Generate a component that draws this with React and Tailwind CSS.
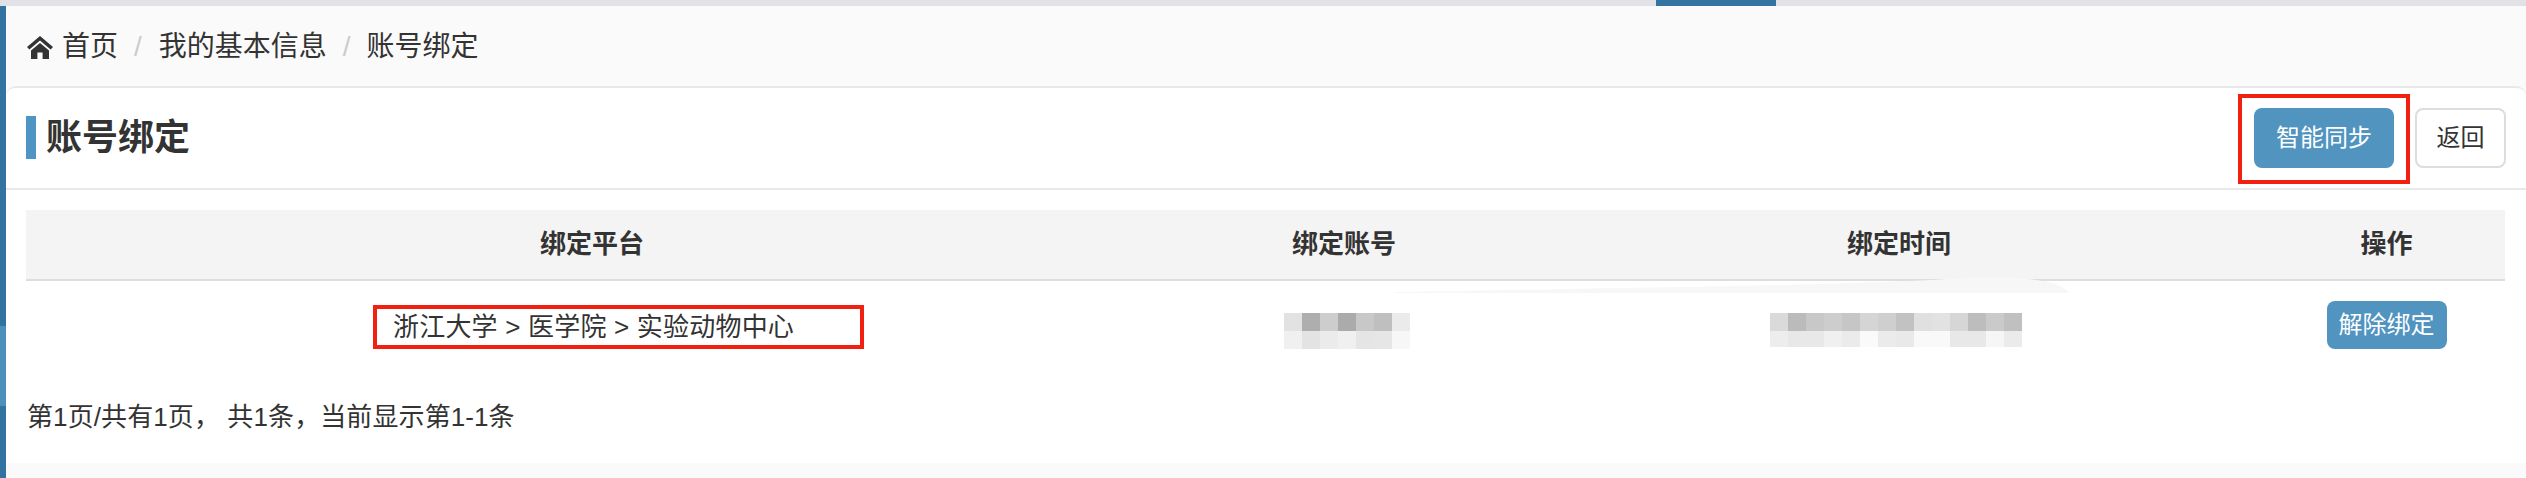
import React from 'react';

const font = { cjk: 'font-["Liberation_Sans","Noto_Sans_CJK_SC",sans-serif]' };

const accountCells = [
    ['#e2e2e2', '#aeaeae', '#cdcdcd', '#ababab', '#c8c8c8', '#bfbfbf', '#ebebeb'],
    ['#f0f0f0', '#e3e3e3', '#ebebeb', '#f0f0f0', '#e5e5e5', '#e6e6e6', '#f7f7f7'],
];

const timeCells = [
    ['#dadada', '#bbbbbb', '#c8c8c8', '#cdcdcd', '#c6c6c6', '#d5d5d5', '#cfcfcf', '#c2c2c2', '#e0e0e0', '#e2e2e2', '#d6d6d6', '#bdbdbd', '#cacaca', '#c0c0c0'],
    ['#ededed', '#e8e8e8', '#e8e8e8', '#f0f0f0', '#ebebeb', '#fafafa', '#ebebeb', '#e9e9e9', '#f9f9f9', '#f9f9f9', '#e8e8e8', '#e8e8e8', '#f6f6f6', '#ebebeb'],
];

// pixelated blur over the private values
const Mosaic = ({ rows, lastHeight, className }) => (
    <div className={`inline-flex flex-col align-top ${className}`}>
        {rows.map((row, i) => (
            <div key={i} className={i === 0 ? 'flex h-[18px]' : lastHeight}>
                {row.map((c, j) => (
                    <div key={j} className="w-[18px] h-full" style={{ backgroundColor: c }}></div>
                ))}
            </div>
        ))}
    </div>
);

const HomeIcon = () => (
    <svg viewBox="0 0 26 23" className="w-[26px] h-[23px] fill-[#333]">
        <path d="M13 0 L26 11 L23.6 13.6 L13 4.6 L2.4 13.6 L0 11 Z" />
        <path d="M13 7 L22 14.6 V23 H15.6 V16.5 H10.4 V23 H4 V14.6 Z" />
    </svg>
);

const App = () => {
    return (
        <div className={`w-[2526px] h-[478px] overflow-hidden flex flex-col bg-[#fafafa] text-[#333] ${font.cjk}`}>
            <div className="h-[6px] shrink-0 flex bg-[#e1e1e7]">
                <div className="w-[1656px]"></div>
                <div className="w-[120px] bg-[#3273a2]"></div>
            </div>

            <div className="flex flex-1 min-h-0">
                <div className="w-[6px] shrink-0 flex flex-col bg-[#3273a2]">
                    <div className="h-[320px]"></div>
                    <div className="h-[80px] bg-[#4d90bb]"></div>
                </div>

                <div className="flex-1 min-w-0 flex flex-col">
                    {/* Breadcrumb */}
                    <div className="h-[80px] shrink-0 flex items-center pl-[21px] pt-[2px] text-[28px] leading-none">
                        <HomeIcon />
                        <span className="ml-[9px]">首页</span>
                        <span className="ml-[16px] mr-[17px] text-[#ccc]">/</span>
                        <span>我的基本信息</span>
                        <span className="mx-[16px] text-[#ccc]">/</span>
                        <span>账号绑定</span>
                    </div>

                    {/* Card */}
                    <div className="h-[377px] shrink-0 bg-white border-t-2 border-[#e8e8e8] rounded-t-[10px]">
                        <div className="h-[102px] border-b-2 border-[#e8e8e8] px-[20px] flex items-center justify-between">
                            <div className="flex items-center h-[43px] mb-[1px] border-l-[10px] border-[#4f95c3] pl-[10px]">
                                <h1 className="text-[36px] font-bold leading-none">账号绑定</h1>
                            </div>
                            <div className="flex items-center gap-[21px]">
                                <div className="relative">
                                    <button className="w-[140px] h-[60px] rounded-[8px] bg-[#5094bf] text-white text-[24px]">智能同步</button>
                                    <div className="absolute left-[-16px] top-[-14px] w-[172px] h-[90px] border-[4px] border-[#f22010]"></div>
                                </div>
                                <button className="w-[91px] h-[60px] rounded-[8px] bg-white border-2 border-[#ddd] text-[24px]">返回</button>
                            </div>
                        </div>

                        <div className="pt-[20px] pl-[20px] pr-[21px] relative">
                            <table className="w-full table-fixed border-collapse">
                                <thead>
                                    <tr className="h-[70px] bg-[#f4f4f4] border-b-2 border-[#ddd] text-[26px] font-bold">
                                        <th className="w-[1132px] text-center">绑定平台</th>
                                        <th className="w-[372px] text-center">绑定账号</th>
                                        <th className="w-[738px] text-center">绑定时间</th>
                                        <th className="text-center">操作</th>
                                    </tr>
                                </thead>
                                <tbody>
                                    <tr className="text-[26px]">
                                        <td className="pt-[20px] text-center align-top">
                                            <div className="inline-flex items-center w-[491px] h-[44px] mt-[4px] ml-[53px] border-[4px] border-[#f22010] pl-[16px] leading-none tracking-[0.2px] whitespace-nowrap">
                                                浙江大学 &gt; 医学院 &gt; 实验动物中心
                                            </div>
                                        </td>
                                        <td className="pt-[32px] text-center align-top">
                                            <Mosaic rows={accountCells} lastHeight="flex h-[18px]" className="ml-[6px]" />
                                        </td>
                                        <td className="pt-[32px] text-center align-top">
                                            <Mosaic rows={timeCells} lastHeight="flex h-[16px]" className="mr-[6px]" />
                                        </td>
                                        <td className="pt-[20px] text-center align-top">
                                            <button className="w-[120px] h-[48px] rounded-[8px] bg-[#5094bf] text-white text-[24px]">解除绑定</button>
                                        </td>
                                    </tr>
                                </tbody>
                            </table>

                            {/* faint smear left over the table in the screenshot */}
                            <svg className="absolute left-[1389px] top-[88px] w-[680px] h-[16px] fill-[#f7f7f7]" viewBox="0 0 680 16">
                                <path d="M0 14 C200 10 450 8 570 0 H620 C650 2 668 6 674 15 H0 Z" />
                            </svg>

                            <p className="mt-[52px] pl-[1px] text-[26px] leading-none tracking-[0.1px] whitespace-nowrap">第1页/共有1页， 共1条，当前显示第1-1条</p>
                        </div>
                    </div>
                </div>
            </div>
        </div>
    );
};

export default App;
